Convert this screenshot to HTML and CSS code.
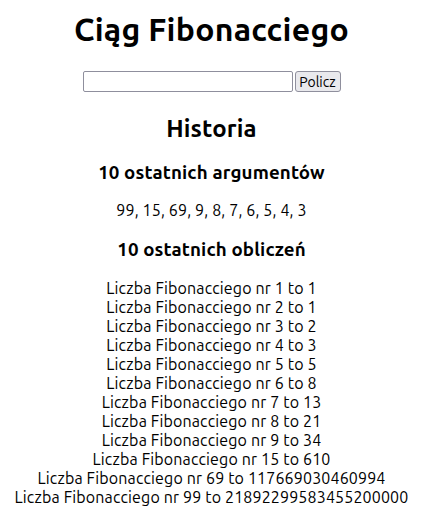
FILE: index.html
```html
<!DOCTYPE html>
<html lang="pl">
<head>
<meta charset="utf-8">
<title>Ciąg Fibonacciego</title>
<link rel="stylesheet" href="styles.css">
</head>
<body>
<h1 class="title">Ciąg Fibonacciego</h1>
<form class="calc">
  <input class="calc-input" type="text"><button class="calc-btn" type="button">Policz</button>
</form>
<h2 class="section-title">Historia</h2>
<h3 class="sub-title">10 ostatnich argumentów</h3>
<p class="args">99, 15, 69, 9, 8, 7, 6, 5, 4, 3</p>
<h3 class="sub-title">10 ostatnich obliczeń</h3>
<div class="results">
  <div>Liczba Fibonacciego nr 1 to 1</div>
  <div>Liczba Fibonacciego nr 2 to 1</div>
  <div>Liczba Fibonacciego nr 3 to 2</div>
  <div>Liczba Fibonacciego nr 4 to 3</div>
  <div>Liczba Fibonacciego nr 5 to 5</div>
  <div>Liczba Fibonacciego nr 6 to 8</div>
  <div>Liczba Fibonacciego nr 7 to 13</div>
  <div>Liczba Fibonacciego nr 8 to 21</div>
  <div>Liczba Fibonacciego nr 9 to 34</div>
  <div>Liczba Fibonacciego nr 15 to 610</div>
  <div>Liczba Fibonacciego nr 69 to 117669030460994</div>
  <div>Liczba Fibonacciego nr 99 to 21892299583455200000</div>
</div>
</body>
</html>
```

FILE: styles.css
```css
body {
  margin: 0 17px 8px 8px;
  padding-top: 9px;
  font-family: Ubuntu, "Open Sans", sans-serif;
  font-size: 16px;
  letter-spacing: 0.15px;
  text-align: center;
  color: #000;
  background: #fff;
}
.title {
  font-size: 32px;
  letter-spacing: 0.25px;
  margin: 2px 0 23px;
  line-height: 37px;
}
.calc {
  display: flex;
  justify-content: center;
  margin: 0;
}
.calc-input {
  width: 210px;
  height: 21px;
  box-sizing: border-box;
  border: 1px solid #8f8f9d;
  border-radius: 2px;
  margin: 0;
  padding: 0 2px;
}
.calc-btn {
  width: 46px;
  height: 21px;
  box-sizing: border-box;
  margin-left: 2px;
  padding: 0;
  font-family: inherit;
  font-size: 14px;
  letter-spacing: 0;
  color: #000;
  border: 1px solid #8f8f9d;
  border-radius: 3px;
  background: #e9e9ed;
}
.section-title {
  font-size: 24px;
  margin: 23px 0 19px;
  line-height: 28px;
}
.sub-title {
  font-size: 18.72px;
  margin: 19px 0 17px;
  line-height: 22px;
}
.args {
  margin: 17px 0 19px;
  line-height: 19px;
}
.results {
  margin-top: 18px;
  line-height: 19px;
}
```
